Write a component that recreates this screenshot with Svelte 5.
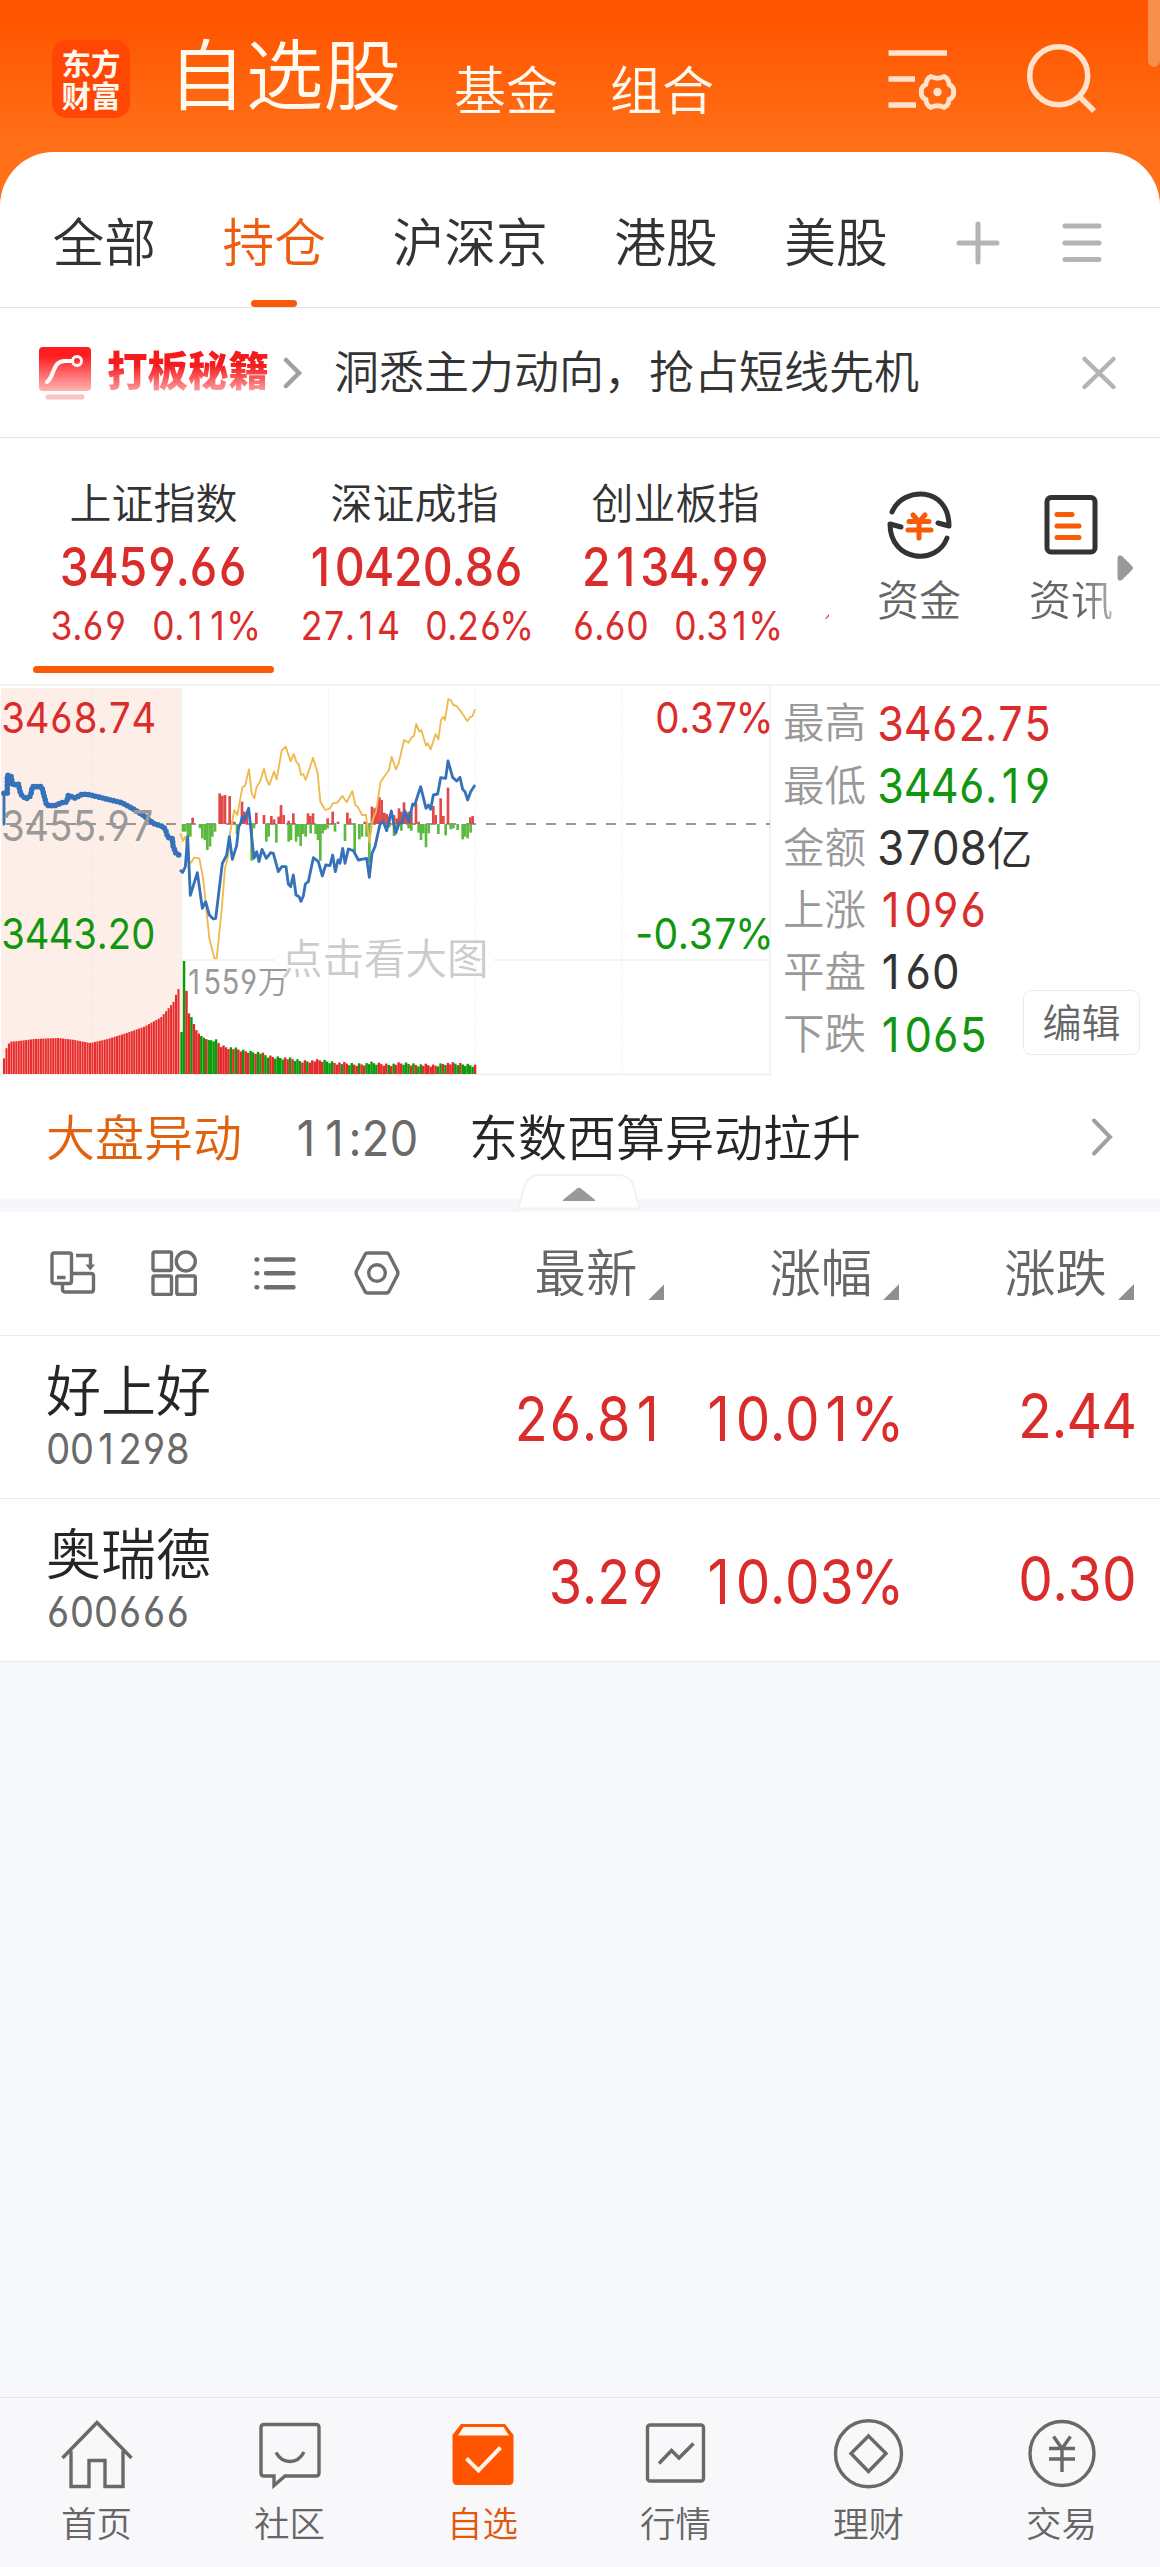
<script>
  const tabs = ['全部', '持仓', '沪深京', '港股', '美股'];

  const indices = [
    { name: '上证指数', value: '3459.66', vw: 183, diff: '3.69', dw: 73, pct: '0.11%', pw: 103 },
    { name: '深证成指', value: '10420.86', vw: 213, diff: '27.14', dw: 96, pct: '0.26%', pw: 103 },
    { name: '创业板指', value: '2134.99', vw: 183, diff: '6.60', dw: 73, pct: '0.31%', pw: 103 }
  ];

  const stats = [
    { label: '最高', value: '3462.75', w: 170, cls: 'up' },
    { label: '最低', value: '3446.19', w: 170, cls: 'down' },
    { label: '金额', value: '3708', w: 106, cls: 'dark', unit: '亿' },
    { label: '上涨', value: '1096', w: 106, cls: 'up' },
    { label: '平盘', value: '160', w: 78.5, cls: 'dark' },
    { label: '下跌', value: '1065', w: 106, cls: 'down' }
  ];

  const stocks = [
    { name: '好上好', code: '001298', last: '26.81', lw: 145, pct: '10.01%', diff: '2.44', fw: 114 },
    { name: '奥瑞德', code: '600666', last: '3.29', lw: 111, pct: '10.03%', diff: '0.30', fw: 113 }
  ];

  const columns = ['最新', '涨幅', '涨跌'];
  const nav = ['首页', '社区', '自选', '行情', '理财', '交易'];

  // Figures are set on a fixed digit pitch; punctuation takes a share of one digit
  const cellOf = { '.': 0.42, ':': 0.44, '%': 1.35, '-': 0.75 };
  const cells = (text, total, size) => {
    const widths = [...text].map((ch) => cellOf[ch] ?? 1);
    const pitch = total / widths.reduce((a, b) => a + b, 0);
    const squeeze = Math.min(1, pitch / (size * 0.63));
    let at = 0;
    const xs = widths.map((w) => {
      const centre = (at + w / 2) * pitch;
      at += w;
      return (centre / squeeze).toFixed(2);
    });
    return { squeeze, xs: xs.join(' ') };
  };

  // Price chart, in a coordinate system of three units per pixel
  const preOpen =
    '8,432 12,432 12,340 22,340 22,286 33,288 38,315 55,312 62,342 78,357 92,347 97,320 125,320 131,342 140,376 165,377 185,368 200,366 205,346 225,354 248,342 268,344 320,357 365,368 400,387 430,406 460,430 490,440 497,450 503,472 517,476 519,497 527,518 538,526';
  const preDots = preOpen.split(' ').slice(2).join(' ');
  const price =
    '540,570 548,577 556,560 563,470 571,646 592,578 607,685 617,665 628,705 640,717 647,715 667,550 680,525 688,470 697,538 710,497 716,440 722,430 727,410 733,420 746,385 762,535 770,515 777,545 786,508 799,535 812,518 820,520 835,575 845,560 858,560 865,612 872,620 880,585 888,645 897,650 903,664 910,648 916,612 925,605 940,533 955,545 967,588 977,555 990,557 998,525 1006,575 1014,540 1020,550 1028,505 1035,550 1045,507 1060,512 1075,540 1100,535 1108,592 1116,520 1125,500 1140,432 1150,425 1160,452 1174,393 1187,460 1198,428 1205,430 1214,392 1226,425 1238,372 1244,375 1262,320 1278,385 1285,375 1292,388 1300,345 1313,342 1322,293 1337,295 1344,243 1358,292 1370,303 1380,292 1388,328 1395,335 1403,360 1412,335 1425,315';
  const lead =
    '541,460 549,483 556,470 566,550 573,548 582,533 598,535 610,600 628,775 643,835 650,835 665,690 675,565 685,525 690,460 703,390 712,405 727,322 735,318 747,268 755,340 763,355 770,320 780,305 792,266 800,300 808,315 822,275 830,298 845,212 857,200 872,244 881,222 890,248 896,252 903,285 910,282 917,300 930,262 939,233 953,280 961,365 976,390 990,385 998,370 1012,368 1027,348 1040,367 1057,333 1066,375 1073,380 1086,405 1098,405 1108,487 1118,420 1128,395 1142,305 1160,280 1167,270 1175,230 1188,268 1196,250 1212,180 1226,188 1235,172 1242,168 1249,132 1258,155 1264,150 1278,197 1283,190 1292,208 1307,162 1315,178 1323,120 1330,110 1335,120 1345,57 1352,60 1360,75 1370,78 1378,88 1402,123 1410,112 1418,108 1425,87';

  const pairs = (s) => s.split(' ').map((p) => p.split(':').map(Number));
  const rises = pairs(
    '578:413 659:340 667:347 675:345 689:348 703:425 726:365 733:395 740:402 769:398 792:405 814:408 822:418 836:410 843:375 851:405 866:422 880:400 924:400 931:408 939:400 983:415 998:395 1014:425 1042:398 1050:415 1094:425 1116:380 1124:385 1131:380 1138:352 1145:360 1153:398 1160:402 1168:410 1182:405 1190:415 1197:385 1204:395 1212:367 1219:398 1226:395 1234:395 1248:370 1256:425 1300:378 1307:405 1322:355 1330:408 1344:323 1411:412 1418:408'
  );
  const falls = pairs(
    '549:455 556:455 564:470 571:470 600:445 607:475 615:480 622:510 630:500 637:470 645:455 711:462 755:542 762:445 799:485 806:470 829:488 866:485 873:480 888:485 895:470 902:498 910:462 917:470 932:460 947:462 954:480 961:542 968:460 976:450 983:445 1005:455 1035:483 1064:520 1078:478 1086:470 1100:470 1108:550 1160:442 1168:442 1182:468 1190:450 1204:452 1226:445 1234:452 1256:458 1263:480 1270:460 1278:502 1286:460 1315:462 1337:466 1352:448 1360:445 1373:450 1388:478 1395:470 1403:475 1412:458'
  );

  const lerp = (keys, x) => {
    for (let i = 1; i < keys.length; i++) {
      const [x0, y0] = keys[i - 1];
      const [x1, y1] = keys[i];
      if (x <= x1) return y0 + ((y1 - y0) * Math.max(0, x - x0)) / (x1 - x0);
    }
    return keys[keys.length - 1][1];
  };
  const preKeys = pairs(
    '9:1135 17:1102 27:1085 45:1084 60:1082 100:1077 170:1074 215:1079 268:1089 320:1077 380:1058 430:1040 480:1012 500:988 517:967 530:930 540:918'
  );
  const preVolume = Array.from({ length: 72 }, (_, i) => {
    const x = 9 + i * 7.37;
    return [x, lerp(preKeys, x)];
  });
  const volKeys = pairs(
    '541:1056 548:843 556:935 563:1000 571:1012 579:1035 586:1052 594:1062 602:1070 620:1080 645:1082 660:1098 690:1104 725:1113 775:1118 800:1130 850:1134 900:1144 960:1142 1000:1148 1060:1154 1110:1150 1160:1154 1210:1151 1260:1155 1300:1158 1330:1150 1425:1156'
  );
  const volColors =
    'GGRRGRRRGGRGGGGRRRRRGRGRRGRRGGRGGRGGRRGGGGRRGRGGGRRGRRRRRRGGGGRRRGRRGGRRGRRGGGGGRRRRGRGRRRGGGRGRGGRRRRRRGGRGRRRGGRGGGGGRGGRRR';
  const volume = Array.from({ length: 120 }, (_, i) => {
    const x = 541 + i * 7.4;
    const wobble = i > 12 ? ((i * 37) % 11) - 5 : 0;
    return [x, i === 1 ? 843 : lerp(volKeys, x) + wobble, volColors[i]];
  });
</script>

{#snippet num(text, w, cap, cls)}
  {@const size = cap / 0.727}
  {@const c = cells(text, w + cap * 0.12, size)}
  <svg class="num {cls}" width={w} height={cap} viewBox="0 0 {w} {cap}">
    <text x={c.xs} y="0" font-size={size} transform="translate({-cap * 0.06} {cap}) scale({c.squeeze} 1)">{text}</text>
  </svg>
{/snippet}

{#snippet label(text, x, cap, base, w, cls)}
  {@const size = cap / 0.727}
  {@const c = cells(text, w, size)}
  <text class="digits {cls}" x={c.xs} y="0" font-size={size} transform="translate({x} {base}) scale({c.squeeze} 1)">{text}</text>
{/snippet}

<div class="app">
  <header>
    <div class="logo"><span>东方</span><span>财富</span></div>
    <h1>自选股</h1>
    <span class="sub">基金</span>
    <span class="sub">组合</span>
    <svg class="filter" width="72" height="64" viewBox="885 48 72 64">
      <path d="M888.500 53H947M888.500 79H915M888.500 105H916" />
      <path
        d="M931 76.500Q937.500 80 944 76.500Q949 79 949 84.500Q954.500 87 953.500 92Q954.500 97 949 99.500Q949 105 944 107.500Q937.500 104 931 107.500Q926 105 926 99.500Q920.500 97 921.500 92Q920.500 87 926 84.500Q926 79 931 76.500Z"
        stroke-width="4.800"
        stroke-linejoin="round"
      />
      <circle class="dot" cx="937.500" cy="92" r="4.200" />
    </svg>
    <svg class="search" width="72" height="72" viewBox="1026 43 72 72">
      <circle cx="1058.700" cy="75.700" r="29" />
      <path d="M1079 96L1094 111" />
    </svg>
    <i class="scrollbar"></i>
  </header>

  <main>
    <nav class="tabs">
      {#each tabs as tab, i}
        <span class:active={i === 1}>{tab}</span>
      {/each}
      <svg class="plus" width="44" height="44" viewBox="0 0 44 44"><path d="M3 22H41M22 3V41" /></svg>
      <svg class="menu" width="44" height="44" viewBox="0 0 44 44"><path d="M5 5H39M5 22H39M5 38.500H39" /></svg>
    </nav>

    <section class="banner">
      <svg width="54" height="56" viewBox="0 0 54 56">
        <defs>
          <linearGradient id="badge" x1="0" y1="0" x2="0" y2="1">
            <stop offset="0.200" stop-color="#fe1c1f" />
            <stop offset="1" stop-color="#ffb3b3" />
          </linearGradient>
        </defs>
        <rect x="1" y="1" width="52" height="44" rx="4" fill="url(#badge)" />
        <path d="M9 36C17 30 14 15 27 15H34" fill="none" stroke="#fff" stroke-width="4" stroke-linecap="round" />
        <circle cx="39" cy="15" r="4.500" fill="none" stroke="#fff" stroke-width="3" />
        <rect x="7.500" y="48.500" width="39" height="5" rx="2" fill="#fbc3c3" />
      </svg>
      <strong>打板秘籍</strong>
      <svg class="chev" width="20" height="34" viewBox="0 0 20 34"><path d="M3 4L16 17L3 30" /></svg>
      <p>洞悉主力动向，抢占短线先机</p>
      <svg class="close" width="36" height="36" viewBox="0 0 36 36"><path d="M3.500 4L32.500 32M32.500 4L3.500 32" /></svg>
    </section>

    <section class="indices">
      {#each indices as ix, i}
        <div class="index" class:selected={i === 0}>
          <span class="name">{ix.name}</span>
          {@render num(ix.value, ix.vw, 39, 'up bold')}
          <div class="change">
            {@render num(ix.diff, ix.dw, 28.5, 'up')}
            {@render num(ix.pct, ix.pw, 28.5, 'up')}
          </div>
        </div>
      {/each}
      <i class="sliver"></i>
      <div class="short">
        <svg width="66" height="70" viewBox="886 490 66 70">
          <path class="ink" d="M892 512C903 486 949 486 949 526L938 523M947 538C937 566 890 562 890 524L901 527" />
          <path class="accent" d="M913 515L919 522L925 515M909 521.500H929M908 530H931M919 522V538" />
        </svg>
        <span>资金</span>
      </div>
      <div class="short fade">
        <svg width="56" height="70" viewBox="1043 490 56 70">
          <rect class="ink" x="1047" y="497.500" width="48" height="54.500" rx="4" />
          <path class="accent" d="M1057 514.500H1072M1057 526H1079M1057 537.500H1079" />
        </svg>
        <span>资讯</span>
      </div>
      <svg class="more" width="17" height="28" viewBox="0 0 17 28"><path d="M0.500 4Q1 0 5 2L15 12Q17 14 15 16L5 26Q1 28 0.500 24Z" /></svg>
    </section>

    <section class="market">
      <svg class="chart" width="772" height="390" viewBox="0 18 2316 1170">
        <rect x="3" y="24" width="542" height="1158" fill="#feeee8" />
        <g class="grid">
          <path d="M277 24V1182M545 24V1182M985 24V1182M1426 24V1182M1866 24V1182" stroke-dasharray="4 5" />
          <path class="solid" d="M3 840H825M1480 840H2310M2310 18V1182M0 1183H2316" />
        </g>
        <path class="zero" d="M18 432H2310" />
        {#each preVolume as [x, y]}
          <rect {x} {y} width="6.200" height={1182 - y} fill="#e82c2c" />
        {/each}
        {#each volume as [x, y, c]}
          <rect {x} {y} width="7.400" height={1182 - y} fill={c === 'G' ? '#0a9a0a' : '#e22a2a'} />
        {/each}
        {#each rises as [x, y]}
          <rect x={x - 4} {y} width="8" height={432 - y} fill="#e24a4a" />
        {/each}
        {#each falls as [x, y]}
          <rect x={x - 4} y="432" width="8" height={y - 432} fill="#5cba40" />
        {/each}
        <polyline class="lead" points={lead} />
        <polyline class="price" points={preOpen} />
        <polyline class="beads" points={preDots} />
        <polyline class="price" points={price} />
        {@render label('3468.74', 3, 93, 158, 465, 'up')}
        {@render label('3455.97', 3, 93, 482, 460, 'grey')}
        {@render label('3443.20', 3, 93, 806, 463, 'down')}
        {@render label('0.37%', 1966, 93, 158, 347, 'up')}
        {@render label('-0.37%', 1905, 93, 806, 408, 'down')}
        {@render label('1559', 555, 73, 943, 218, 'grey')}
        <text class="cjk grey" x="773" y="939" font-size="92">万</text>
        <text class="cjk mark" x="843" y="883" font-size="124.500">点击看大图</text>
      </svg>
      <div class="stats">
        {#each stats as s}
          <div class="stat">
            <span>{s.label}</span>
            {@render num(s.value, s.w, 35, s.cls)}
            {#if s.unit}<b>{s.unit}</b>{/if}
          </div>
        {/each}
        <button>编辑</button>
      </div>
    </section>

    <section class="news">
      <em>大盘异动</em>
      {@render num('11:20', 122, 36, 'mid')}
      <p>东数西算异动拉升</p>
      <svg class="chev" width="24" height="40" viewBox="0 0 24 40"><path d="M4 3.500L20 20L4 36.500" /></svg>
    </section>

    <div class="divider">
      <svg class="handle" width="124" height="38" viewBox="0 0 124 38">
        <path d="M1.500 35.500L7 14Q10.500 2 24 2H100Q113.500 2 117 14L122.500 35.500Z" />
        <path class="tri" d="M46 28Q45 28 47 26L60 15.500Q62 14 64 15.500L77 26Q79 28 77.500 28Z" />
      </svg>
    </div>

    <section class="toolbar">
      <svg width="46" height="46" viewBox="0 0 46 46">
        <rect x="2" y="3" width="19.500" height="30.500" rx="2" />
        <path d="M7 27.500H15.500M21.500 23.500H41Q43.500 23.500 43.500 26V39.500Q43.500 42 41 42H15Q12.500 42 12.500 39.500V34M26 5.500H40.500V16" />
        <path class="fill" d="M35.500 14.500H45L40.300 20.500Z" />
      </svg>
      <svg width="46" height="46" viewBox="0 0 46 46">
        <rect x="2" y="2" width="18.500" height="18.500" rx="1.500" />
        <circle cx="34.800" cy="11.500" r="9.500" />
        <rect x="2" y="26" width="18.500" height="18.500" rx="1.500" />
        <rect x="25.800" y="26" width="18.500" height="18.500" rx="1.500" />
      </svg>
      <svg width="46" height="46" viewBox="0 0 46 46">
        <path class="thick" d="M14 9.500H41.500M14 23.300H41.500M14 37.200H41.500" />
        <path class="thick" d="M4.500 9.500H5.300M4.500 23.300H5.300M4.500 37.200H5.300" />
      </svg>
      <svg width="46" height="46" viewBox="0 0 46 46">
        <path d="M13.500 3H32.500Q34 3 35 4.500L43.500 21Q44.300 23 43.500 25L35 41.500Q34 43 32.500 43H13.500Q12 43 11 41.500L2.500 25Q1.700 23 2.500 21L11 4.500Q12 3 13.500 3Z" />
        <circle cx="23" cy="23" r="8.300" />
      </svg>
      <div class="heads">
        {#each columns as c}
          <span class="head">{c}<i></i></span>
        {/each}
      </div>
    </section>

    {#each stocks as s}
      <section class="stock">
        <div class="who">
          <span>{s.name}</span>
          {@render num(s.code, 140, 31, 'mid')}
        </div>
        <div class="cell">{@render num(s.last, s.lw, 44.5, 'up')}</div>
        <div class="cell">{@render num(s.pct, 194, 44.5, 'up')}</div>
        <div class="cell raised">{@render num(s.diff, s.fw, 44.5, 'up')}</div>
      </section>
    {/each}
  </main>

  <div class="empty"></div>

  <footer>
    {#each nav as item, i}
      <div class="item" class:on={i === 2}>
        <svg width="76" height="76" viewBox="0 0 76 76">
          {#if i === 0}
            <path d="M3.500 40L38 4.500L72.500 40M12 33V68.500H30V42.500H46V68.500H64V33" />
          {:else if i === 1}
            <path d="M12 6.500H64Q67 6.500 67 9.500V55Q67 58 64 58H33L22 67.500V58H12Q9 58 9 55V9.500Q9 6.500 12 6.500Z" />
            <path d="M24 34.500Q29 43.500 38 43.500Q47 43.500 52 34" />
          {:else if i === 2}
            <path class="box" d="M16 6H60L68.500 17V62Q68.500 67 64 67H12Q7.500 67 7.500 62V17Z" />
            <path class="lid" d="M18.500 9H58.500L64 17.500H13Z" />
            <path class="tick" d="M21.500 40.500L33.500 52.500L55.500 29.500" />
          {:else if i === 3}
            <rect x="9.500" y="7" width="56" height="56" rx="2.500" />
            <path d="M21 45.500L33.500 32.500L41 40L55.500 25.500" />
          {:else if i === 4}
            <circle cx="37.500" cy="35.800" r="33" />
            <path d="M37.500 18L55 35.500L37.500 53.500L20 35.500Z" />
          {:else}
            <circle cx="38" cy="35.500" r="32" />
            <path d="M29.500 18.500L38 30.500L46.500 18.500M25 30.500H51M25 41H51M38 30.500V54" />
          {/if}
        </svg>
        <span>{item}</span>
      </div>
    {/each}
  </footer>
</div>

<style>
  :global(body) {
    background: #f7f8fa;
  }
  .app {
    width: 1160px;
    height: 2567px;
    display: flex;
    flex-direction: column;
    overflow: hidden;
    font-family: 'Noto Sans CJK SC', sans-serif;
    font-weight: 350;
    line-height: 1;
    color: #333;
    background: #f7f8fb;
  }
  svg {
    display: block;
    flex: none;
    fill: none;
  }
  span,
  p,
  h1,
  strong,
  em {
    white-space: nowrap;
    margin: 0;
    font-style: normal;
  }
  .num,
  .chart {
    overflow: visible;
  }
  .num text,
  .digits {
    font-family: Inter, sans-serif;
    font-weight: 370;
    font-feature-settings: 'cv03', 'cv04';
    text-anchor: middle;
    fill: currentColor;
  }
  .num.bold text {
    font-weight: 540;
  }
  .up {
    color: #db2c2c;
  }
  .down {
    color: #12960f;
  }
  .dark {
    color: #333;
  }
  .mid {
    color: #6a6a6a;
  }
  .grey {
    color: #999;
  }

  header {
    position: relative;
    box-sizing: border-box;
    height: 210px;
    padding: 40px 0 0 52px;
    display: flex;
    align-items: flex-start;
    background: linear-gradient(#ff5500 0, #ff5500 20px, #ff7018 145px);
    color: #fffaf0;
  }
  .logo {
    box-sizing: border-box;
    width: 78px;
    height: 78px;
    padding-top: 6px;
    border-radius: 15px;
    background: #ff4604;
    display: flex;
    flex-direction: column;
    align-items: center;
  }
  .logo span {
    font-size: 29.500px;
    line-height: 32px;
    font-weight: 700;
  }
  h1 {
    margin: -8px 0 0 38px;
    font-size: 77.700px;
    font-weight: 350;
  }
  .sub {
    margin: 22px 0 0 53px;
    font-size: 52px;
  }
  .sub + .sub {
    margin-left: 52px;
  }
  .filter,
  .search {
    stroke: #ffe2cc;
    stroke-width: 5.500;
  }
  .filter {
    margin: 8px 0 0 171px;
  }
  .filter .dot {
    fill: #ffe2cc;
    stroke: none;
  }
  .search {
    margin: 3px 0 0 69px;
  }
  .scrollbar {
    position: absolute;
    top: 0;
    right: 0;
    width: 12px;
    height: 67px;
    border-radius: 0 0 6px 6px;
    background: #f6904b;
  }

  main {
    position: relative;
    margin-top: -58px;
    border-radius: 54px 54px 0 0;
    background: #fff;
  }
  .tabs {
    box-sizing: border-box;
    height: 156px;
    padding: 62px 0 0 52.500px;
    display: flex;
    align-items: flex-start;
    border-bottom: 1px solid #e3e3e5;
    font-size: 51.800px;
  }
  .tabs span {
    margin-right: 66.400px;
    height: 93px;
  }
  .tabs .active {
    color: #ee5c10;
    display: flex;
    flex-direction: column;
    justify-content: space-between;
    align-items: center;
  }
  .tabs .active::after {
    content: '';
    width: 46px;
    height: 7px;
    border-radius: 4px;
    background: #f95a08;
  }
  .plus,
  .menu {
    stroke: #b4b4b4;
    stroke-width: 5;
    stroke-linecap: round;
  }
  .plus {
    margin: 7px 60px 0 2px;
  }
  .menu {
    margin-top: 7px;
  }

  .banner {
    box-sizing: border-box;
    height: 130px;
    padding: 38px 43px 0 38px;
    display: flex;
    align-items: flex-start;
    border-bottom: 1px solid #e3e3e5;
  }
  .banner strong {
    margin: 3px 0 0 15px;
    height: 46px;
    font-size: 40.500px;
    font-weight: 900;
    background: linear-gradient(#f51a1c 35%, #ffb0b0 100%);
    background-clip: text;
    color: transparent;
  }
  .chev {
    stroke: #a0a0a0;
    stroke-width: 4.500;
    stroke-linecap: round;
  }
  .banner .chev {
    margin: 10px 0 0 14px;
  }
  .banner p {
    margin: 1px auto 0 31px;
    font-size: 45px;
  }
  .close {
    margin-top: 9px;
    stroke: #b4b4b4;
    stroke-width: 4.500;
    stroke-linecap: round;
  }

  .indices {
    box-sizing: border-box;
    height: 248px;
    padding: 42px 0 0 33px;
    display: flex;
    align-items: flex-start;
    border-bottom: 2px solid #f3f3f3;
  }
  .index {
    width: 241px;
    height: 193px;
    margin-right: 20px;
    display: flex;
    flex-direction: column;
    align-items: center;
    flex: none;
  }
  .index .name {
    margin-bottom: 25px;
    font-size: 42px;
  }
  .change {
    margin: 25px 0 0 2px;
    display: flex;
    gap: 29px;
  }
  .selected::after {
    content: '';
    margin-top: auto;
    width: 241px;
    height: 7px;
    border-radius: 4px;
    background: #fa5a08;
  }
  .sliver {
    width: 4px;
    height: 5px;
    margin: 134px 43px 0 9px;
    background: #d33;
    clip-path: polygon(100% 0, 100% 40%, 30% 100%, 0 100%);
  }
  .short {
    width: 84px;
    margin: 10px 67px 0 5px;
    display: flex;
    flex-direction: column;
    align-items: center;
    gap: 17px;
    font-size: 42px;
    color: #666;
    flex: none;
  }
  .short.fade {
    margin: 10px 4px 0 1px;
  }
  .fade span {
    background: linear-gradient(90deg, #666 60%, #b0b0b0);
    background-clip: text;
    color: transparent;
  }
  .ink {
    stroke: #333;
    stroke-width: 5;
    stroke-linecap: round;
    stroke-linejoin: round;
  }
  .accent {
    stroke: #f95a08;
    stroke-width: 5;
    stroke-linecap: round;
  }
  .more {
    margin-top: 74px;
    fill: #999;
  }

  .market {
    display: flex;
    height: 390px;
  }
  .chart .grid path {
    stroke: #e8e8ea;
    stroke-width: 3;
  }
  .chart .grid .solid {
    stroke: #f0f0f0;
    stroke-width: 5;
  }
  .zero {
    stroke: #777;
    stroke-width: 5;
    stroke-dasharray: 30 30;
  }
  .lead {
    stroke: #f0b94e;
    stroke-width: 5.500;
    stroke-linejoin: round;
  }
  .price {
    stroke: #3672b9;
    stroke-width: 8.500;
    stroke-linejoin: round;
  }
  .beads {
    stroke: #3672b9;
    stroke-width: 17;
    stroke-linecap: round;
    stroke-dasharray: 0 11;
  }
  .cjk {
    fill: currentColor;
  }
  .mark {
    color: #ccc;
  }
  .stats {
    position: relative;
    flex: 1;
    padding: 6px 0 0 11px;
  }
  .stat {
    height: 62.200px;
    display: flex;
    align-items: center;
    font-size: 41.500px;
    color: #999;
  }
  .stat span {
    margin: -4px 12.500px 0 0;
  }
  .stat b {
    margin: -4px 0 0 2px;
    font-size: 46px;
    font-weight: 350;
    color: #333;
  }
  button {
    position: absolute;
    right: 20px;
    bottom: 21px;
    width: 117px;
    height: 65px;
    padding: 0 0 4px;
    border: 1px solid #ebebeb;
    border-radius: 8px;
    background: #fff;
    font: 350 39px/1 'Noto Sans CJK SC', sans-serif;
    color: #666;
  }

  .news {
    box-sizing: border-box;
    height: 123px;
    padding: 34px 46px 0 46px;
    display: flex;
    align-items: flex-start;
    font-size: 49px;
    color: #262626;
  }
  .news em {
    color: #e0620f;
    margin-right: 52px;
  }
  .news .num {
    margin-top: 10px;
  }
  .news p {
    margin: 0 auto 0 53px;
  }
  .news .chev {
    margin-top: 7px;
    stroke-width: 4;
  }
  .divider {
    position: relative;
    height: 13px;
    background: #f6f7fa;
  }
  .handle {
    position: absolute;
    left: 517px;
    bottom: 1px;
    fill: #fff;
    stroke: #f1f2f4;
    stroke-width: 2;
  }
  .handle .tri {
    fill: #999;
    stroke: none;
  }

  .toolbar {
    box-sizing: border-box;
    height: 124px;
    padding: 38px 26px 0 50px;
    display: flex;
    gap: 55.200px;
    border-bottom: 1px solid #eaeaea;
  }
  .toolbar svg {
    stroke: #6e6e6e;
    stroke-width: 3.400;
  }
  .toolbar .thick {
    stroke-width: 4.400;
    stroke-linecap: round;
  }
  .toolbar .fill {
    fill: #6e6e6e;
    stroke: none;
  }
  .heads {
    margin: -9px 0 0 auto;
    height: 57px;
    display: flex;
    gap: 105px;
  }
  .head {
    display: flex;
    align-items: flex-end;
    height: 57px;
    font-size: 51.400px;
    line-height: 57px;
    color: #666;
  }
  .head i {
    width: 16px;
    height: 16px;
    margin: 0 0 0 11px;
    transform: translateY(2px);
    background: #8e8e93;
    clip-path: polygon(100% 0, 100% 100%, 0 100%);
  }

  .stock {
    box-sizing: border-box;
    height: 163px;
    padding: 24px 26px 0 46px;
    display: grid;
    grid-template-columns: 1fr 235px 236px 236.500px;
    border-bottom: 1px solid #eaeaea;
  }
  .who {
    font-size: 55px;
    display: flex;
    flex-direction: column;
    gap: 18px;
    color: #262626;
  }
  .who .num {
    margin-left: 2px;
  }
  .cell {
    padding-top: 36px;
    display: flex;
    justify-content: flex-end;
  }
  .raised {
    padding-top: 33px;
  }

  .empty {
    flex: 1;
  }
  footer {
    box-sizing: border-box;
    height: 170px;
    padding: 20px 2px 0 0;
    display: grid;
    grid-template-columns: repeat(6, 1fr);
    border-top: 1px solid #e2e2e4;
    background: #f8f8fb;
    color: #666;
  }
  .item {
    display: flex;
    flex-direction: column;
    align-items: center;
    gap: 10px;
    font-size: 35.500px;
  }
  .item svg {
    stroke: #696969;
    stroke-width: 3.400;
  }
  .on {
    color: #e0590c;
  }
  .item .box {
    fill: #ff5500;
    stroke: none;
  }
  .item .lid {
    fill: #fff7f0;
    stroke: none;
  }
  .item .tick {
    stroke: #fff1e6;
    stroke-width: 4;
  }
</style>
